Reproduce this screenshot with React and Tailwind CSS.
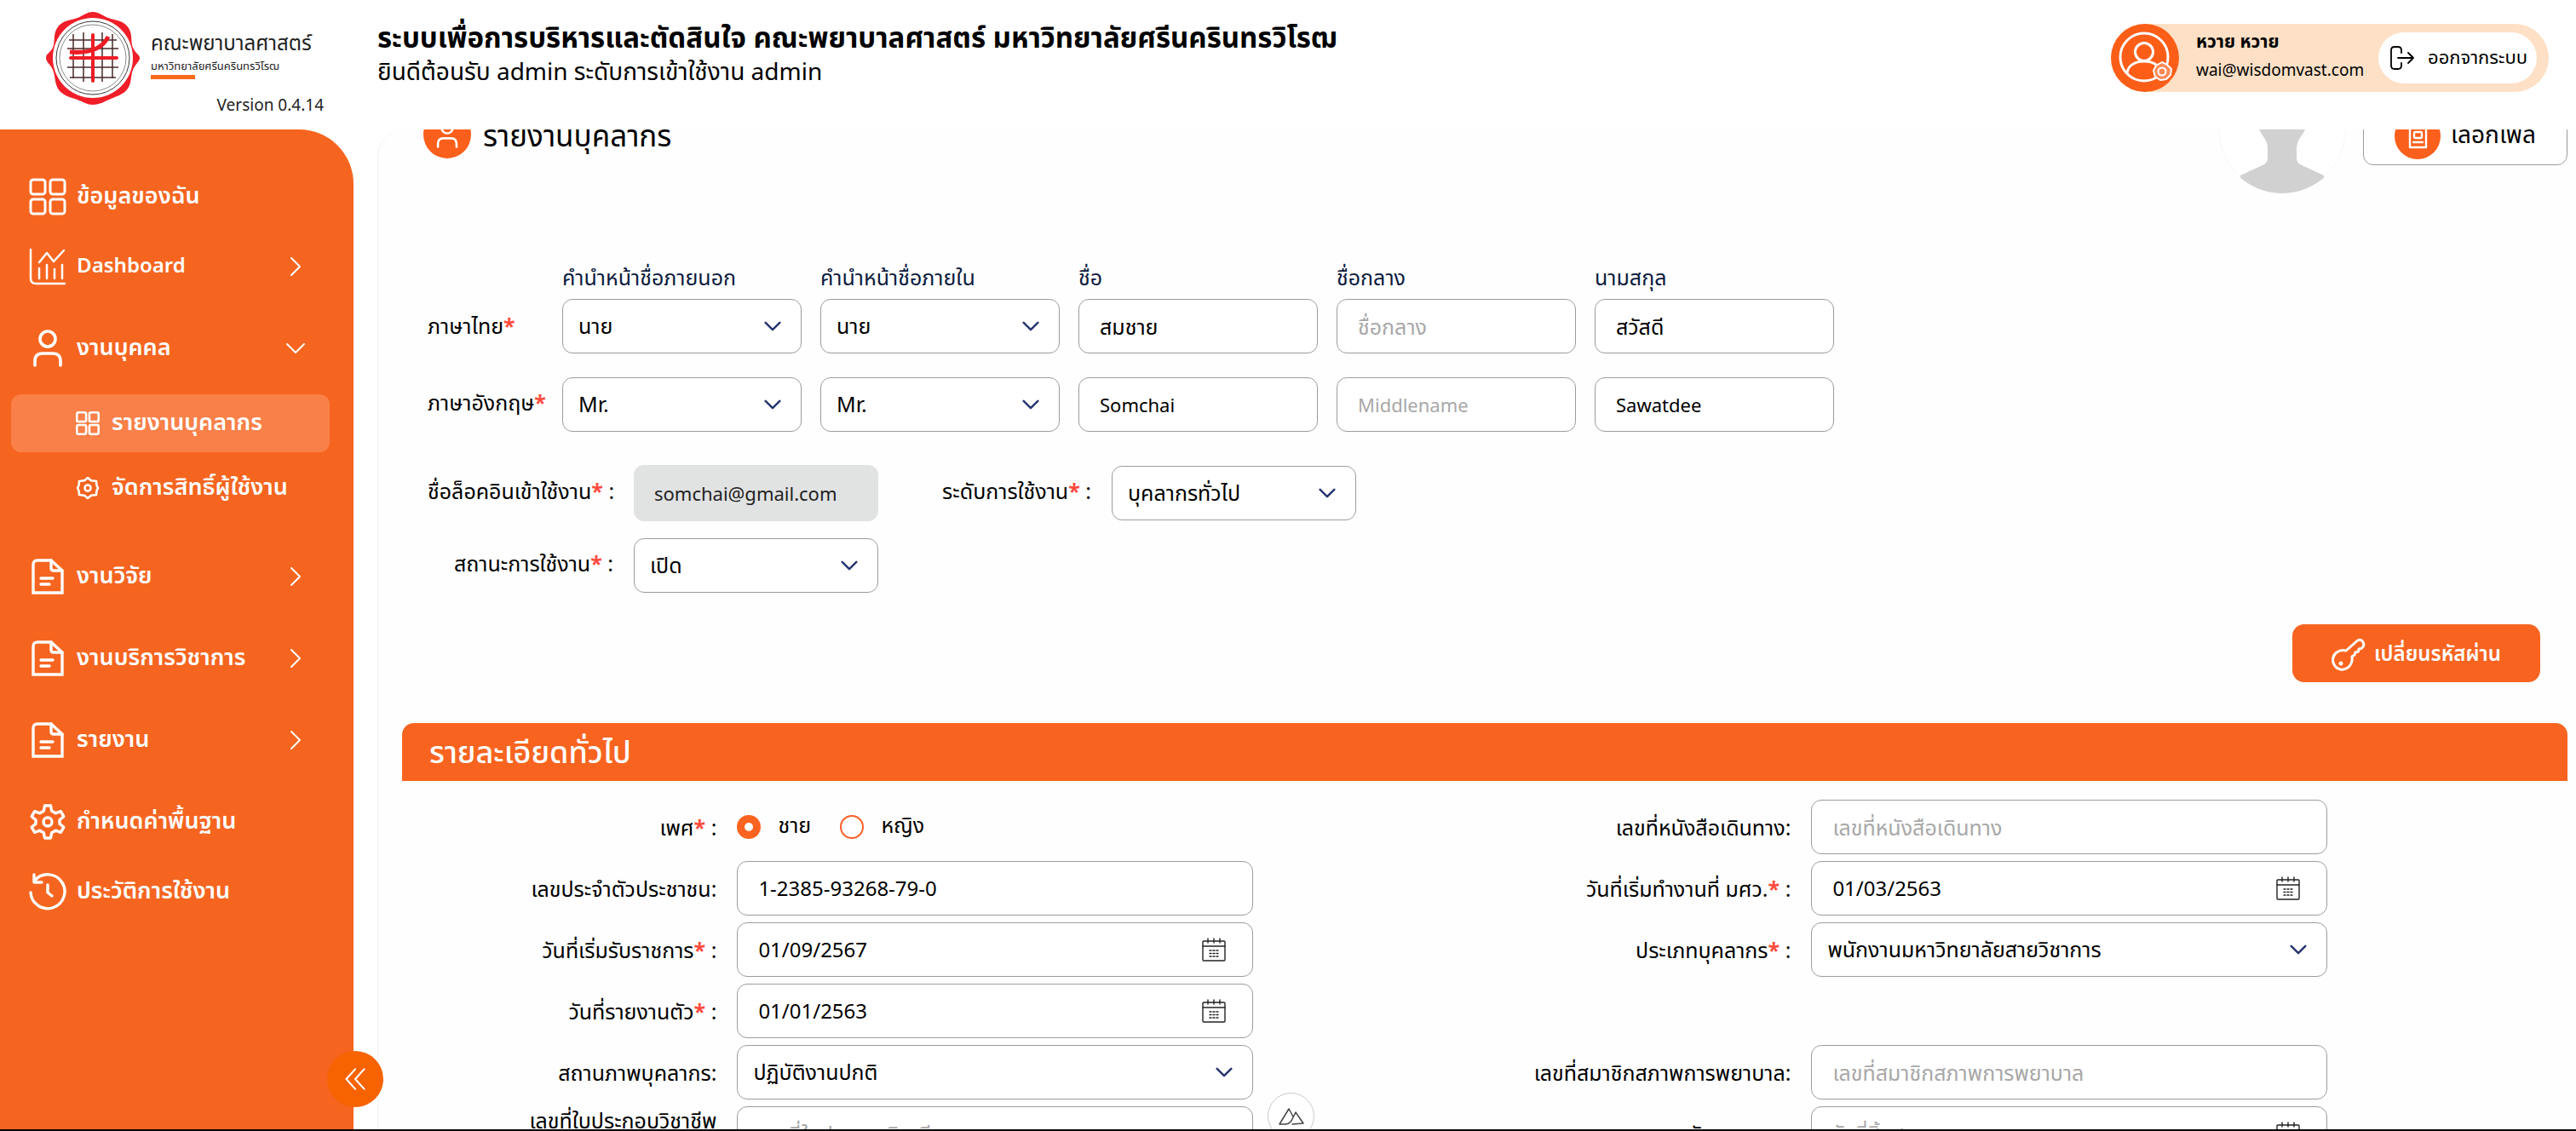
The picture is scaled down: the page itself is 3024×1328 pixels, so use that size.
import React from "react";

const stroke = { fill: "none", stroke: "currentColor", strokeLinecap: "round", strokeLinejoin: "round" };

function GridIcon({ className, width = 3 }) {
  return (
    <svg viewBox="0 0 44 44" className={className} {...stroke} strokeWidth={width}>
      <rect x="2" y="2" width="17" height="17" rx="3" />
      <rect x="25" y="2" width="17" height="17" rx="3" />
      <rect x="2" y="25" width="17" height="17" rx="3" />
      <rect x="25" y="25" width="17" height="17" rx="3" />
    </svg>
  );
}

function ChartIcon({ className }) {
  return (
    <svg viewBox="0 0 44 44" className={className} {...stroke} strokeWidth="2.5">
      <path d="M2 2v34q0 6 6 6h34" />
      <path d="M12 17l9-11 8 10L41 3" />
      <path d="M12 24v12M21 20v16M30 25v11M39 20v16" />
    </svg>
  );
}

function PersonIcon({ className }) {
  return (
    <svg viewBox="0 0 44 44" className={className} {...stroke} strokeWidth="3.6">
      <circle cx="22" cy="11" r="9" />
      <path d="M7 42V37q0-9 9-9h12q9 0 9 9v5" />
    </svg>
  );
}

function DocIcon({ className }) {
  return (
    <svg viewBox="0 0 44 44" className={className} {...stroke} strokeLinejoin="miter" strokeWidth="3.4">
      <path d="M5 41V8q0-5 5-5h16l13 12v26z" />
      <path d="M26 3v9q0 3 3 3h10" />
      <path d="M14 24h14M14 31h10" />
    </svg>
  );
}

function GearIcon({ className }) {
  return (
    <svg viewBox="0 0 44 44" className={className} {...stroke} strokeWidth="3.4">
      <path d="M18.500 3h7l1.200 6.200 4.600 2.600 6-2.100 3.500 6-4.800 4.100v4.400l4.800 4.100-3.500 6-6-2.100-4.600 2.600L25.500 41h-7l-1.200-6.200-4.600-2.600-6 2.100-3.500-6L8 24.200v-4.400l-4.800-4.100 3.500-6 6 2.100 4.600-2.600z" />
      <circle cx="22" cy="22" r="5" />
    </svg>
  );
}

function HexGearIcon({ className }) {
  return (
    <svg viewBox="0 0 28 28" className={className} {...stroke} strokeWidth="2.6">
      <path d="M14 2l4 3.200 6 .8.500 5L26 14l-1.500 3-.5 5-6 .8-4 3.200-4-3.200-6-.8-.5-5L2 14l1.500-3 .5-5 6-.8z" />
      <circle cx="14" cy="14" r="3.500" />
    </svg>
  );
}

function HistoryIcon({ className }) {
  return (
    <svg viewBox="0 0 44 44" className={className} {...stroke} strokeWidth="3.400">
      <path d="M2 23a20 20 0 1 0 5-14.500" />
      <path d="M6 2v9h9" />
      <path d="M22 14v9l5 4" />
    </svg>
  );
}

function Chevron({ className, dir = "down", width = 2 }) {
  const d = dir === "down" ? "M2 7l10 10L22 7" : "M7 2l10 10L7 22";
  return (
    <svg viewBox="0 0 24 24" className={className} {...stroke} strokeWidth={width}>
      <path d={d} />
    </svg>
  );
}

function CalendarIcon({ className }) {
  return (
    <svg viewBox="0 0 28 28" className={className} {...stroke} strokeWidth="1.400">
      <rect x="1" y="4" width="26" height="23" rx="1" />
      <path d="M1 10h26M7 1v5M14 1v5M21 1v5" />
      <path d="M9 15h2M13 15h2M17 15h2M9 18.500h2M13 18.500h2M17 18.500h2M9 22h2M13 22h2M17 22h2" />
    </svg>
  );
}

function Seal({ className }) {
  return (
    <svg viewBox="0 0 110 110" className={className}>
      <path
        d="M55 1C63 1 68 7 76 9S92 12 97 20s2 16 5 23 8 8 8 12-5 7-8 14-1 15-6 22-13 9-20 12-13 7-21 7-14-5-21-7-16-5-20-12-3-15-6-22-8-9-8-14 5-6 8-12 0-15 5-23 13-9 21-11S47 1 55 1z"
        fill="#f01e28"
      />
      <circle cx="55" cy="55" r="47" fill="#fff" />
      <circle cx="55" cy="55" r="43" fill="none" stroke="#3a3a3a" strokeWidth="1" />
      <circle cx="55" cy="55" r="39" fill="none" stroke="#8a8a8a" strokeWidth="1" />
      <path d="M32 27v52M44 25v58M66 25v58M78 27v52M27 34h56M25 44h60M25 66h60M28 78h54" stroke="#4a2a2a" strokeWidth="1.500" fill="none" />
      <path d="M55 28v54M29 55h54" stroke="#ee1c25" strokeWidth="4" strokeLinecap="round" />
      <path d="M28 48q35 3 45-18" stroke="#ee1c25" strokeWidth="5" fill="none" />
    </svg>
  );
}

function Required() {
  return <span className="font-bold text-[#ff4a3d]">*</span>;
}

const frameClass =
  "h-16 w-full rounded-[12px] border border-[#9c9c9c] bg-white pt-1 text-black placeholder:text-[#a8a8a8] outline-none";

function TextBox({ id, label, value, placeholder, latin }) {
  return (
    <input
      id={id}
      aria-label={label}
      defaultValue={value}
      placeholder={placeholder}
      className={`${frameClass} px-6 ${latin ? "text-[22px]" : "text-[25px]"}`}
    />
  );
}

function SelectBox({ id, label, value }) {
  return (
    <div className="relative w-full">
      <select id={id} aria-label={label} className={`${frameClass} appearance-none px-[18px] text-[25px]`}>
        <option>{value}</option>
      </select>
      <Chevron className="pointer-events-none absolute right-6 top-5 h-6 w-5 text-[#27356f]" width={3} />
    </div>
  );
}

function DateBox({ id, value, placeholder }) {
  return (
    <div className="relative w-full">
      <input id={id} defaultValue={value} placeholder={placeholder} className={`${frameClass} px-6 text-2xl`} />
      <CalendarIcon className="pointer-events-none absolute right-8 top-[18px] size-7 text-[#222]" />
    </div>
  );
}

function NavItem({ icon: Icon, text, arrow, className = "", size = "text-[27px]" }) {
  return (
    <a href="#" className={`flex h-[68px] items-center gap-3 pl-[34px] pr-14 ${className}`}>
      <Icon className="size-11 shrink-0" />
      <span className={`flex-1 whitespace-nowrap ${size}`}>{text}</span>
      {arrow && <Chevron dir={arrow} className="size-6 shrink-0" />}
    </a>
  );
}

function Sidebar() {
  return (
    <aside className="w-[415px] shrink-0 rounded-tr-[64px] bg-[#f56520] pt-[45px] font-semibold text-white">
      <nav>
        <NavItem icon={GridIcon} text="ข้อมูลของฉัน" />
        <NavItem icon={ChartIcon} text="Dashboard" arrow="right" className="mt-3.5" size="text-2xl" />
        <NavItem icon={PersonIcon} text="งานบุคคล" arrow="down" className="mt-7" />
        <div className="mt-5 flex flex-col gap-2 pl-[13px] pr-7 text-[27px]">
          <a href="#" className="flex h-[68px] items-center gap-3.5 rounded-[12px] bg-[#f98048] pl-[76px]">
            <GridIcon className="size-7" width={4} />
            <span className="whitespace-nowrap">รายงานบุคลากร</span>
          </a>
          <a href="#" className="flex h-[68px] items-center gap-3.5 pl-[76px]">
            <HexGearIcon className="size-7" />
            <span className="whitespace-nowrap">จัดการสิทธิ์ผู้ใช้งาน</span>
          </a>
        </div>
        <NavItem icon={DocIcon} text="งานวิจัย" arrow="right" className="mt-9" />
        <NavItem icon={DocIcon} text="งานบริการวิชาการ" arrow="right" className="mt-7" />
        <NavItem icon={DocIcon} text="รายงาน" arrow="right" className="mt-7" />
        <NavItem icon={GearIcon} text="กำหนดค่าพื้นฐาน" className="mt-7" />
        <NavItem icon={HistoryIcon} text="ประวัติการใช้งาน" className="mt-3.5" />
      </nav>
    </aside>
  );
}

function Header() {
  return (
    <header className="flex h-[152px] shrink-0 bg-white">
      <div className="flex w-[443px] shrink-0 pl-[54px]">
        <Seal className="mt-[13px] size-[110px]" />
        <div className="ml-[13px] mt-9 flex w-[203px] flex-col whitespace-nowrap">
          <span className="text-2xl leading-8 text-[#222]">คณะพยาบาลศาสตร์</span>
          <span className="text-[13px] leading-5 text-[#222]">มหาวิทยาลัยศรีนครินทรวิโรฒ</span>
          <span className="h-[5px] w-[52px] bg-[#f96a1b]" />
          <span className="mt-[18px] self-end text-[19px] leading-7 text-[#222]">Version 0.4.14</span>
        </div>
      </div>
      <div className="mt-6 flex-1 text-black">
        <h1 className="text-[33px] font-bold leading-11">
          ระบบเพื่อการบริหารและตัดสินใจ คณะพยาบาลศาสตร์ มหาวิทยาลัยศรีนครินทรวิโรฒ
        </h1>
        <p className="text-[28px] leading-9">ยินดีต้อนรับ admin ระดับการเข้าใช้งาน admin</p>
      </div>
      <div className="mr-8 mt-7 flex h-20 items-center rounded-full bg-[#fde0c6] pr-3.5">
        <svg viewBox="0 0 80 80" className="size-20" {...stroke}>
          <circle cx="40" cy="40" r="40" fill="#fc5e18" stroke="none" />
          <g stroke="#fff" strokeWidth="3">
            <circle cx="39" cy="39" r="28" />
            <circle cx="39" cy="33" r="10.500" />
            <path d="M19 58c1-9 9-14 20-14s19 5 20 14" />
            <path d="M60 45l6 3 5 5-1 7-5 5-7 1-6-4-2-7 3-6z" fill="#ff8a58" strokeWidth="2" />
            <circle cx="60" cy="56" r="4.500" strokeWidth="2" />
          </g>
        </svg>
        <div className="ml-5 w-[214px] whitespace-nowrap leading-8 text-black">
          <p className="text-[21px] font-bold leading-8">หวาย หวาย</p>
          <p className="text-[19px] leading-9">wai@wisdomvast.com</p>
        </div>
        <button className="flex h-[60px] w-[186px] items-center gap-4 whitespace-nowrap rounded-full bg-white pl-3.5 text-[22px] text-black">
          <svg viewBox="0 0 28 28" className="size-7 shrink-0" {...stroke} strokeWidth="1.800">
            <path d="M13 8V5q0-4-4-4H5Q1 1 1 5v18q0 4 4 4h4q4 0 4-4v-3" />
            <path d="M9 14h18M21 8l6 6-6 6" />
          </svg>
          ออกจากระบบ
        </button>
      </div>
    </header>
  );
}

function PageTitle() {
  return (
    <div className="-mt-[22px] flex h-[124px] items-start">
      <span className="ml-[53px] flex size-14 items-center justify-center rounded-full bg-[#fb5f1c]">
        <PersonIcon className="size-8 text-white" />
      </span>
      <h2 className="ml-3.5 text-[35px] leading-16 text-black">รายงานบุคลากร</h2>
      <svg viewBox="0 0 150 150" className="-mt-[53px] ml-auto size-[150px]">
        <defs>
          <clipPath id="avatar">
            <circle cx="75" cy="75" r="75" />
          </clipPath>
        </defs>
        <circle cx="75" cy="75" r="74" fill="#fff" stroke="#f6f6f7" />
        <path
          clipPath="url(#avatar)"
          fill="#d1d1d1"
          d="M75 20c-22 0-34 18-32 36 1 9 3 14 5 19 4 9 10 12 10 23v10c0 5-2 7-6 9L26 129v21h98v-21l-26-12c-4-2-6-4-6-9V98c0-11 6-14 10-23 2-5 4-10 5-19 2-18-10-36-32-36z"
        />
      </svg>
      <button className="-mt-2 ml-5 mr-2.5 flex h-[72px] w-60 items-center gap-3 whitespace-nowrap rounded-[12px] border border-[#9c9c9c] bg-white pl-9 pt-1 text-[28px] text-black">
        <svg viewBox="0 0 54 54" className="size-[54px] shrink-0" {...stroke}>
          <circle cx="27" cy="27" r="27" fill="#fb5f1c" stroke="none" />
          <rect x="18" y="14" width="19" height="26" stroke="#fff" strokeWidth="2.400" />
          <rect x="23" y="22" width="9" height="7" rx="1" stroke="#fff" strokeWidth="2.400" />
          <path d="M22 34h11" stroke="#fff" strokeWidth="2.400" />
        </svg>
        เลือกไฟล์
      </button>
    </div>
  );
}

function NameGrid() {
  const heads = ["คำนำหน้าชื่อภายนอก", "คำนำหน้าชื่อภายใน", "ชื่อ", "ชื่อกลาง", "นามสกุล"];
  return (
    <div className="ml-[58px] mt-[49px] grid grid-cols-[136px_repeat(5,281px)] items-center gap-x-[22px]">
      <span />
      {heads.map((h) => (
        <span key={h} className="h-12 whitespace-nowrap text-[25px] leading-12 text-[#0d1b3e]">
          {h}
        </span>
      ))}
      <span className="whitespace-nowrap pt-1 text-[25px]">
        ภาษาไทย
        <Required />
      </span>
      <SelectBox label="คำนำหน้าชื่อภายนอก ภาษาไทย" value="นาย" />
      <SelectBox label="คำนำหน้าชื่อภายใน ภาษาไทย" value="นาย" />
      <TextBox label="ชื่อ ภาษาไทย" value="สมชาย" />
      <TextBox label="ชื่อกลาง ภาษาไทย" placeholder="ชื่อกลาง" />
      <TextBox label="นามสกุล ภาษาไทย" value="สวัสดี" />
      <span className="mt-7 whitespace-nowrap text-[25px]">
        ภาษาอังกฤษ
        <Required />
      </span>
      <div className="mt-7"><SelectBox label="คำนำหน้าชื่อภายนอก ภาษาอังกฤษ" value="Mr." /></div>
      <div className="mt-7"><SelectBox label="คำนำหน้าชื่อภายใน ภาษาอังกฤษ" value="Mr." /></div>
      <div className="mt-7"><TextBox latin label="ชื่อ ภาษาอังกฤษ" value="Somchai" /></div>
      <div className="mt-7"><TextBox latin label="ชื่อกลาง ภาษาอังกฤษ" placeholder="Middlename" /></div>
      <div className="mt-7"><TextBox latin label="นามสกุล ภาษาอังกฤษ" value="Sawatdee" /></div>
    </div>
  );
}

function AccountGrid() {
  const label = "whitespace-nowrap text-right text-[25px]";
  return (
    <div className="ml-[58px] mt-[39px] grid grid-cols-[218px_287px_226px_287px] items-center gap-x-6 gap-y-5">
      <label htmlFor="login" className={label}>
        ชื่อล็อคอินเข้าใช้งาน
        <Required /> :
      </label>
      <input
        id="login"
        readOnly
        defaultValue="somchai@gmail.com"
        className="h-[66px] w-full rounded-[12px] bg-[#e1e2e2] px-6 pt-1 text-[22px] text-[#222] outline-none"
      />
      <label htmlFor="level" className={label}>
        ระดับการใช้งาน
        <Required /> :
      </label>
      <SelectBox id="level" value="บุคลากรทั่วไป" />
      <label htmlFor="status" className={label}>
        สถานะการใช้งาน
        <Required /> :
      </label>
      <SelectBox id="status" value="เปิด" />
    </div>
  );
}

function Field({ id, label, required, multiline, children }) {
  return (
    <div className="flex h-16 items-center gap-6">
      <label htmlFor={id} className="w-[28.5%] whitespace-nowrap pt-1 text-right text-[25px] leading-8">
        {label}
        {required && (
          <>
            <Required /> :
          </>
        )}
        {multiline && (
          <>
            <br />
            {multiline}
          </>
        )}
      </label>
      <div className="flex w-[48%] items-center">{children}</div>
    </div>
  );
}

const radioClass =
  "size-7 appearance-none rounded-full border-2 border-[#fa5f28] bg-white checked:border-[9px] checked:border-[#fb6320]";

function Details() {
  return (
    <div className="mt-[22px] grid grid-cols-2 px-2.5 text-black">
      <div className="flex flex-col gap-2">
        <Field label="เพศ" required>
          <input id="male" type="radio" name="gender" defaultChecked className={radioClass} />
          <label htmlFor="male" className="ml-5 w-[73px] text-[25px]">
            ชาย
          </label>
          <input id="female" type="radio" name="gender" className={radioClass} />
          <label htmlFor="female" className="ml-5 text-[25px]">
            หญิง
          </label>
        </Field>
        <Field id="idcard" label="เลขประจำตัวประชาชน:">
          <DateLikeBox id="idcard" value="1-2385-93268-79-0" />
        </Field>
        <Field id="govdate" label="วันที่เริ่มรับราชการ" required>
          <DateBox id="govdate" value="01/09/2567" />
        </Field>
        <Field id="report" label="วันที่รายงานตัว" required>
          <DateBox id="report" value="01/01/2563" />
        </Field>
        <Field id="state" label="สถานภาพบุคลากร:">
          <SelectBox id="state" value="ปฏิบัติงานปกติ" />
        </Field>
        <Field id="license" label="เลขที่ใบประกอบวิชาชีพ" multiline="การพยาบาล:">
          <TextBox id="license" placeholder="เลขที่ใบประกอบวิชาชีพ" />
        </Field>
      </div>
      <div className="flex flex-col gap-2">
        <Field id="passport" label="เลขที่หนังสือเดินทาง:">
          <TextBox id="passport" placeholder="เลขที่หนังสือเดินทาง" />
        </Field>
        <Field id="start" label="วันที่เริ่มทำงานที่ มศว." required>
          <DateBox id="start" value="01/03/2563" />
        </Field>
        <Field id="type" label="ประเภทบุคลากร" required>
          <SelectBox id="type" value="พนักงานมหาวิทยาลัยสายวิชาการ" />
        </Field>
        <div className="h-16" />
        <Field id="member" label="เลขที่สมาชิกสภาพการพยาบาล:">
          <TextBox id="member" placeholder="เลขที่สมาชิกสภาพการพยาบาล" />
        </Field>
        <Field id="expire" label="วันหมดอายุ:">
          <DateBox id="expire" placeholder="วันที่สิ้นสุด" />
        </Field>
      </div>
    </div>
  );
}

function DateLikeBox({ id, value }) {
  return <input id={id} defaultValue={value} className={`${frameClass} px-6 text-2xl`} />;
}

export default function App() {
  return (
    <div className="relative flex h-screen flex-col overflow-hidden border-b-2 border-black bg-white font-['Noto_Sans_Thai','Noto_Sans',sans-serif]">
      <Header />
      <div className="flex min-h-0 flex-1">
        <Sidebar />
        <main className="ml-7 min-w-0 flex-1 overflow-hidden rounded-tl-[32px] border-l border-[#f0f0f1] bg-[#fefefe] text-black">
          <PageTitle />
          <NameGrid />
          <AccountGrid />
          <div className="mr-[42px] mt-[37px] flex justify-end">
            <button className="flex h-[68px] w-[291px] items-center justify-center gap-2.5 whitespace-nowrap rounded-[14px] bg-[#f86420] pt-1 text-2xl font-semibold text-white">
              <svg viewBox="0 0 40 40" className="size-10" {...stroke} strokeWidth="3">
                <path d="M17 15L30 3.500q3-2.500 6 0 3 3.500 1 7l-2 2-3 .5-.5 3-3.500 1-1 3-3 2c1 6-2 11-5 13-6 4-12 2-15-2-4-5-3-12 2-16 3-2 7-3 11-2z" />
                <circle cx="11" cy="30" r="1" fill="#fff" />
              </svg>
              เปลี่ยนรหัสผ่าน
            </button>
          </div>
          <section className="ml-7 mr-2.5 mt-12">
            <h3 className="h-[68px] rounded-t-[14px] bg-[#f86420] pl-8 text-4xl font-medium leading-[72px] text-white">
              รายละเอียดทั่วไป
            </h3>
            <Details />
          </section>
        </main>
      </div>
      <button
        aria-label="ย่อเมนู"
        className="absolute bottom-[26px] left-[384px] flex size-[66px] items-center justify-center rounded-full bg-[#f76300] text-white"
      >
        <svg viewBox="0 0 24 24" className="size-7" {...stroke} strokeWidth="1.800">
          <path d="M12 2L3 12l9 10M21 2l-9 10 9 10" />
        </svg>
      </button>
      <button
        aria-label="เลื่อนขึ้น"
        className="absolute -bottom-3 left-1/2 -ml-6 flex size-[55px] items-center justify-center rounded-full border border-[#c9c9c9] bg-white text-[#444]"
      >
        <svg viewBox="0 0 30 20" className="h-5 w-[30px]" {...stroke} strokeWidth="1.500">
          <path d="M1 19L12 1l5 9M1 19h8q5-1 7-6l4-8 9 13-13 1" />
        </svg>
      </button>
    </div>
  );
}
